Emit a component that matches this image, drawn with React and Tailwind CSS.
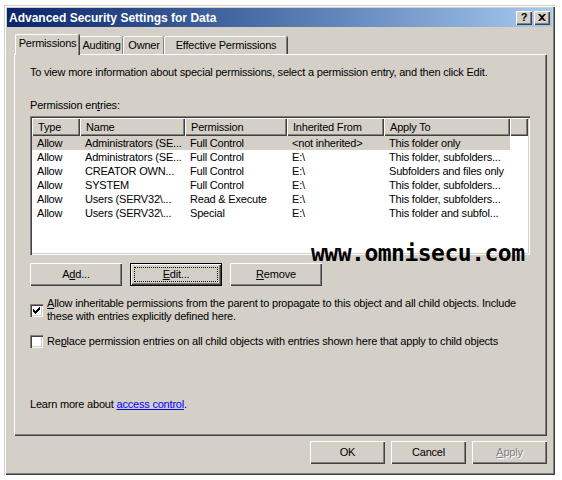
import { Fragment } from "react";

const COLUMNS = [
  { label: "Type", w: "w-[48px]" },
  { label: "Name", w: "w-[105px]" },
  { label: "Permission", w: "w-[102px]" },
  { label: "Inherited From", w: "w-[97px]" },
  { label: "Apply To", w: "w-[126px]" },
];

const ROWS = [
  ["Allow", "Administrators (SE...", "Full Control", "<not inherited>", "This folder only"],
  ["Allow", "Administrators (SE...", "Full Control", "E:\\", "This folder, subfolders..."],
  ["Allow", "CREATOR OWN...", "Full Control", "E:\\", "Subfolders and files only"],
  ["Allow", "SYSTEM", "Full Control", "E:\\", "This folder, subfolders..."],
  ["Allow", "Users (SERV32\\...", "Read & Execute", "E:\\", "This folder, subfolders..."],
  ["Allow", "Users (SERV32\\...", "Special", "E:\\", "This folder and subfol..."],
];

const raised =
  "shadow-[inset_1px_1px_#ffffff,inset_-1px_-1px_#404040,inset_-2px_-2px_#808080]";

function Btn({ children, className = "", focused = false, disabled = false }) {
  if (focused) {
    return (
      <div className={`h-[23px] border border-black bg-[#d4d0c8] ${className}`}>
        <div className={`h-full ${raised} p-[3px]`}>
          <div className="h-full border border-dotted border-black flex items-center justify-center">
            {children}
          </div>
        </div>
      </div>
    );
  }
  return (
    <div
      className={`h-[23px] bg-[#d4d0c8] ${raised} flex items-center justify-center ${
        disabled ? "text-[#808080] [text-shadow:1px_1px_#ffffff]" : ""
      } ${className}`}
    >
      {children}
    </div>
  );
}

function Checkbox({ checked }) {
  return (
    <div className="w-[13px] h-[13px] shrink-0 bg-white shadow-[inset_1px_1px_#808080,inset_2px_2px_#404040,inset_-1px_-1px_#ffffff,inset_-2px_-2px_#d4d0c8] flex items-center justify-center">
      {checked && (
        <svg width="7" height="7" viewBox="0 0 7 7">
          <path d="M0 2h1v1h1v1h1V3h1V2h1V1h1V0h1v3H6v1H5v1H4v1H3v1H2V6H1V5H0z" fill="#000" />
        </svg>
      )}
    </div>
  );
}

function Tab({ label, selected, className = "" }) {
  return (
    <div
      className={`${className} border-t border-l border-white rounded-tl-[2px] rounded-tr-[2px] shadow-[inset_-1px_0_#808080,1px_0_#404040] flex items-center justify-center bg-[#d4d0c8] ${
        selected ? "h-[21px] -mb-[1px] relative z-10 pb-[3px]" : "h-[18px]"
      }`}
    >
      {label}
    </div>
  );
}

export default function App() {
  return (
    <div className="w-[562px] h-[480px] bg-white relative pl-[4px] pt-[5px] font-['Liberation_Sans',Arial,sans-serif] text-[11px] leading-[13px] tracking-[-0.2px] text-black">
      <div className="w-[551px] h-[470px] bg-[#d4d0c8] p-[3px] shadow-[inset_1px_1px_#d4d0c8,inset_2px_2px_#ffffff,inset_-1px_-1px_#404040,inset_-2px_-2px_#808080] flex flex-col">
        {/* title bar */}
        <div className="h-[19px] bg-gradient-to-r from-[#0a246a] to-[#a6caf0] flex items-center pl-[2px] pr-[2px]">
          <span className="text-white font-bold text-[12px] leading-none tracking-normal flex-1">
            Advanced Security Settings for Data
          </span>
          <div className="flex gap-[2px]">
            <div className={`w-[16px] h-[14px] bg-[#d4d0c8] ${raised} flex items-center justify-center font-bold text-[11px] leading-none`}>
              ?
            </div>
            <div className={`w-[16px] h-[14px] bg-[#d4d0c8] ${raised} flex items-center justify-center`}>
              <svg width="8" height="7" viewBox="0 0 8 7">
                <path d="M0 0h2l2 2 2-2h2L5 3.5 8 7H6L4 5 2 7H0l3-3.5z" fill="#000" />
              </svg>
            </div>
          </div>
        </div>

        {/* tabs */}
        <div className="mt-[7px] ml-[7px] mr-[5px] flex flex-col">
          <div className="flex items-end h-[20px] pl-[1px]">
            <Tab label="Permissions" selected className="w-[64px]" />
            <Tab label="Auditing" className="w-[44px]" />
            <Tab label="Owner" className="w-[41px]" />
            <Tab label="Effective Permissions" className="w-[123px]" />
          </div>

          {/* panel */}
          <div className="h-[381px] border-t border-l border-white shadow-[inset_-1px_-1px_#808080,1px_1px_#404040] mr-[1px] mb-[1px] pl-[15px] pt-[11px] flex flex-col">
            <div>To view more information about special permissions, select a permission entry, and then click Edit.</div>
            <div className="mt-[20px]">
              Permission en<u>t</u>ries:
            </div>

            {/* list */}
            <div className="relative mt-[4px] w-[500px] h-[139px] bg-white p-[2px] shadow-[inset_1px_1px_#808080,inset_2px_2px_#404040,inset_-1px_-1px_#ffffff,inset_-2px_-2px_#d4d0c8]">
              <div className="flex h-[18px]">
                {COLUMNS.map((c) => (
                  <div key={c.label} className={`${c.w} bg-[#d4d0c8] ${raised} pl-[6px] flex items-center`}>
                    {c.label}
                  </div>
                ))}
                <div className={`flex-1 bg-[#d4d0c8] ${raised}`} />
              </div>
              {ROWS.map((r, i) => (
                <div key={i} className={`flex h-[14px] items-center w-[478px] ${i === 0 ? "bg-[#d4d0c8]" : ""}`}>
                  {r.map((cell, j) => (
                    <div key={j} className={`${COLUMNS[j].w} pl-[5px] whitespace-nowrap overflow-hidden`}>
                      {cell}
                    </div>
                  ))}
                </div>
              ))}
            </div>

            {/* list buttons */}
            <div className="flex gap-[8px] mt-[8px]">
              <Btn className="w-[92px]">
                A<u>d</u>d...
              </Btn>
              <Btn className="w-[92px]" focused>
                <span>
                  <u>E</u>dit...
                </span>
              </Btn>
              <Btn className="w-[92px]">
                <u>R</u>emove
              </Btn>
            </div>

            <div className="flex items-center gap-[4px] mt-[11px]">
              <Checkbox checked />
              <div>
                <u>A</u>llow inheritable permissions from the parent to propagate to this object and all child objects. Include
                <br />
                these with entries explicitly defined here.
              </div>
            </div>

            <div className="flex items-center gap-[4px] mt-[12px]">
              <Checkbox />
              <div>
                Re<u>p</u>lace permission entries on all child objects with entries shown here that apply to child objects
              </div>
            </div>

            <div className="mt-[50px]">
              Learn more about <span className="text-[#0000ff] underline">access control</span>.
            </div>
          </div>
        </div>

        {/* dialog buttons */}
        <div className="flex justify-end gap-[6px] mt-[5px] mr-[5px]">
          <Btn className="w-[75px]">OK</Btn>
          <Btn className="w-[75px]">Cancel</Btn>
          <Btn className="w-[75px]" disabled>
            <u>A</u>pply
          </Btn>
        </div>
      </div>

      {/* watermark */}
      <div className="absolute left-[311px] top-[242px] font-['DejaVu_Sans_Mono',monospace] font-bold text-[23px] leading-none tracking-[-0.5px] text-black">
        www.omnisecu.com
      </div>
    </div>
  );
}
